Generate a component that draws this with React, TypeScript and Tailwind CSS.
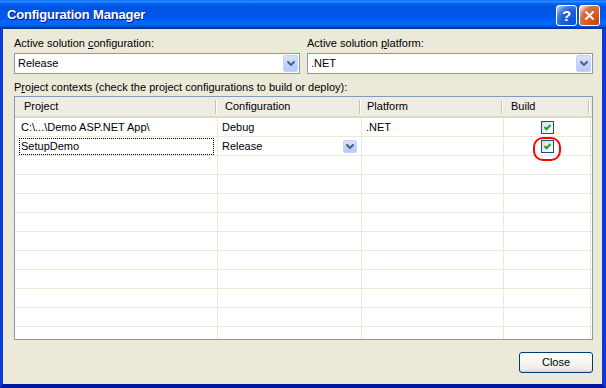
import React from "react";

const COLS = [203, 144, 142, 87];

function Chevron({ w = 8, h = 5 }: { w?: number; h?: number }) {
  return (
    <svg width={w} height={h} viewBox="0 0 8 5" className="block">
      <path d="M1 1 L4 4 L7 1" fill="none" stroke="#4D6185" strokeWidth="2" strokeLinecap="square" />
    </svg>
  );
}

function ComboButton({ className = "" }: { className?: string }) {
  return (
    <div
      className={
        "flex items-center justify-center rounded-[2px] border border-[#C3D3FD] bg-[linear-gradient(180deg,#D8E4FD_0%,#C4D5FB_50%,#B7CAF7_100%)] " +
        className
      }
    >
      <Chevron />
    </div>
  );
}

function Check() {
  return (
    <div className="flex h-[13px] w-[13px] items-center justify-center border border-[#1C5180] bg-[linear-gradient(135deg,#DCDCD7_0%,#FFFFFF_100%)]">
      <svg width="11" height="11" viewBox="0 0 11 11" className="block">
        <path d="M2.5 5 L4.5 7.2 L8.5 3" fill="none" stroke="#21A121" strokeWidth="2" />
      </svg>
    </div>
  );
}

function Row({ children }: { children?: React.ReactNode[] }) {
  const cells = children ?? [];
  return (
    <div className="flex h-[19px] shrink-0 border-b border-[#EBE9D8]">
      {COLS.map((w, i) => (
        <div
          key={i}
          className="relative flex shrink-0 items-center border-r border-[#EBE9D8]"
          style={{ width: w }}
        >
          {cells[i]}
        </div>
      ))}
      <div className="flex-1" />
    </div>
  );
}

export default function App() {
  const headers = [
    { label: "Project", pl: "pl-[9px]" },
    { label: "Configuration", pl: "pl-[7px]" },
    { label: "Platform", pl: "pl-[5px]" },
    { label: "Build", pl: "pl-[7px]" },
  ];

  return (
    <div className="flex h-[388px] w-[606px] flex-col overflow-hidden bg-[#0831D9] font-['Liberation_Sans',Arial,sans-serif] text-[11px] leading-[13px] text-black">
      {/* Title bar */}
      <div className="flex h-[29px] shrink-0 items-center bg-[linear-gradient(180deg,#0058ee_0%,#3593ff_4%,#288eff_6%,#127dff_8%,#036ffc_10%,#0262ee_14%,#0057e5_20%,#0054e3_24%,#0055eb_56%,#005bf5_66%,#026afe_76%,#0062ef_86%,#0052d6_92%,#0040ab_94%,#003092_100%)] pl-[7px] pr-[6px]">
        <div className="pt-[1px] text-[13px] font-bold leading-[16px] tracking-[-0.2px] text-white [text-shadow:1px_1px_#0F1089]">
          Configuration Manager
        </div>
        <div className="ml-auto flex gap-[2px] pt-[2px]">
          <div className="flex h-[21px] w-[21px] items-center justify-center rounded-[3px] border border-white bg-[radial-gradient(circle_at_90%_90%,#0054e9_0%,#2263d5_55%,#4479e4_70%,#a3bbec_90%,#ffffff_100%)] text-[15px] font-bold leading-none text-white">
            ?
          </div>
          <div className="flex h-[21px] w-[21px] items-center justify-center rounded-[3px] border border-white bg-[radial-gradient(circle_at_90%_90%,#cc4600_0%,#dc6527_55%,#cd7546_70%,#ffccb2_90%,#ffffff_100%)]">
            <svg width="11" height="11" viewBox="0 0 11 11" className="block">
              <path d="M1.5 1.5 L9.5 9.5 M9.5 1.5 L1.5 9.5" stroke="white" strokeWidth="2" />
            </svg>
          </div>
        </div>
      </div>

      {/* Body */}
      <div className="flex flex-1 flex-col border-b-[4px] border-l-[3px] border-r-[4px] border-b-[#0019A0] border-l-[#0A3BD8] border-r-[#0A3BD8] bg-[#ECE9D8] pl-[11px] pr-[9px] pt-[8px]">
        <div className="flex w-[579px] gap-[7px]">
          <div className="flex w-[286px] flex-col">
            <div className="h-[13px]">
              Active solution <span className="underline">c</span>onfiguration:
            </div>
            <div className="mt-[3px] flex h-[21px] items-stretch border border-[#7F9DB9] bg-white p-[1px]">
              <div className="flex flex-1 items-center pl-[2px]">Release</div>
              <ComboButton className="w-[15px]" />
            </div>
          </div>
          <div className="flex w-[286px] flex-col">
            <div className="h-[13px]">
              Active solution <span className="underline">p</span>latform:
            </div>
            <div className="mt-[3px] flex h-[21px] items-stretch border border-[#7F9DB9] bg-white p-[1px]">
              <div className="flex flex-1 items-center pl-[2px]">.NET</div>
              <ComboButton className="w-[15px]" />
            </div>
          </div>
        </div>

        <div className="mt-[7px] h-[13px]">
          P<span className="underline">r</span>oject contexts (check the project configurations to build or deploy):
        </div>

        {/* Grid */}
        <div className="mt-[2px] flex h-[244px] w-[579px] flex-col overflow-hidden border border-[#7F9DB9] bg-white">
          <div className="flex h-[21px] shrink-0 border-b-[2px] border-[#DEDAC9] bg-[#EFEDE3]">
            {headers.map((h, i) => (
              <div key={i} className={"flex shrink-0 items-center " + h.pl} style={{ width: COLS[i] }}>
                <span>{h.label}</span>
                <div className="ml-auto mr-[1px] h-[14px] w-[2px] border-l border-r border-l-[#C7C5B2] border-r-white" />
              </div>
            ))}
            <div className="flex-1" />
          </div>

          <Row>
            {[
              <span key="a" className="pl-[6px] pt-[1px]">C:\...\Demo ASP.NET App\</span>,
              <span key="b" className="pl-[4px] pt-[1px]">Debug</span>,
              <span key="c" className="pl-[4px] pt-[1px]">.NET</span>,
              <div key="d" className="flex w-full justify-center"><Check /></div>,
            ]}
          </Row>
          <Row>
            {[
              <div key="a" className="ml-[4px] mr-[3px] mt-[1px] flex h-[17px] flex-1 items-center border border-dotted border-black pl-[1px]">
                SetupDemo
              </div>,
              <div key="b" className="flex w-full items-center pl-[4px] pr-[4px] pt-[1px]">
                <span>Release</span>
                <ComboButton className="ml-auto h-[13px] w-[14px]" />
              </div>,
              <span key="c" />,
              <div key="d" className="flex w-full justify-center">
                <div className="relative">
                  <Check />
                  <div className="absolute left-[-8px] top-[-3px] h-[24px] w-[28px] rounded-[10px] border-2 border-[#FF0000]" />
                </div>
              </div>,
            ]}
          </Row>
          {Array.from({ length: 10 }).map((_, i) => (
            <Row key={i} />
          ))}
        </div>

        <div className="mt-[12px] flex w-[579px] justify-end">
          <div className="flex h-[21px] w-[74px] items-center justify-center rounded-[3px] border border-[#003C74] bg-[linear-gradient(180deg,#FFFFFF_0%,#F4F3EE_60%,#ECEBE6_86%,#D6D0C5_100%)]">
            Close
          </div>
        </div>
      </div>
    </div>
  );
}
